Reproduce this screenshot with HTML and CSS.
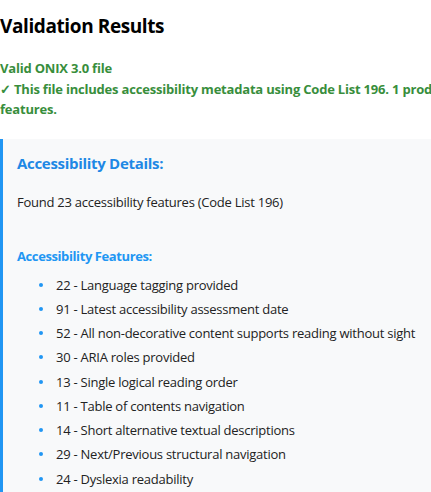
FILE: index.html
```html
<!DOCTYPE html>
<html>
<head>
<meta charset="utf-8">
<link rel="stylesheet" href="styles.css">
</head>
<body>
<div class="page">
  <h2 class="title">Validation Results</h2>
  <div class="status">
    <div>Valid ONIX 3.0 file</div>
    <div>✓ This file includes accessibility metadata using Code List 196. 1 product(s) contain accessibility features.</div>
  </div>
  <div class="details">
    <h3 class="details-title">Accessibility Details:</h3>
    <p class="summary">Found 23 accessibility features (Code List 196)</p>
    <h4 class="features-title">Accessibility Features:</h4>
    <ul class="features">
      <li>22 - Language tagging provided</li>
      <li>91 - Latest accessibility assessment date</li>
      <li>52 - All non-decorative content supports reading without sight</li>
      <li>30 - ARIA roles provided</li>
      <li>13 - Single logical reading order</li>
      <li>11 - Table of contents navigation</li>
      <li>14 - Short alternative textual descriptions</li>
      <li>29 - Next/Previous structural navigation</li>
      <li>24 - Dyslexia readability</li>
      <li>36 - Appearance can be modified</li>
    </ul>
  </div>
</div>
</body>
</html>
```
FILE: styles.css
```css
html, body {
  margin: 0;
  padding: 0;
  overflow: hidden;
  background: #fff;
}
.page {
  width: 615px;
  font-family: "Open Sans", "Noto Sans", sans-serif;
  color: #222;
  font-size: 13px;
  letter-spacing: -0.25px;
}
.title {
  margin: 0;
  padding-top: 12px;
  font-size: 19px;
  font-weight: 700;
  color: #000;
  line-height: 28px;
  letter-spacing: -0.4px;
}
.status {
  margin-top: 18px;
  color: #388e3c;
  font-weight: 700;
  font-size: 13px;
  line-height: 20.5px;
  letter-spacing: -0.2px;
}
.details {
  margin-top: 19px;
  background: #f8f9fa;
  border-left: 3px solid #2196f3;
  padding: 12px 14px;
}
.details-title {
  margin: 0;
  font-size: 15px;
  font-weight: 700;
  color: #1e88e5;
  line-height: 24px;
  letter-spacing: -0.3px;
}
.summary {
  margin: 17px 0 0;
  line-height: 20px;
}
.features-title {
  margin: 34px 0 0;
  font-size: 13px;
  font-weight: 700;
  color: #2196f3;
  line-height: 20px;
  letter-spacing: -0.4px;
}
.features {
  margin: 7px 0 0;
  padding-left: 39px;
  list-style: none;
}
.features li {
  position: relative;
  line-height: 24.25px;
}
.features li::before {
  content: "";
  position: absolute;
  left: -17px;
  top: 10px;
  width: 4px;
  height: 4px;
  border-radius: 50%;
  background: #2196f3;
}
```
